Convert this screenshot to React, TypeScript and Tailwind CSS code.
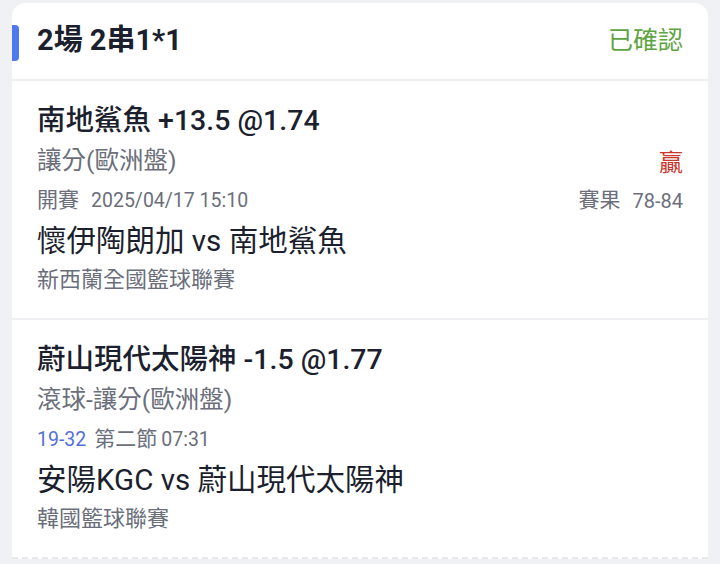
import React from 'react';

const font = { fontFamily: 'Roboto, "Noto Sans CJK TC", sans-serif' };

interface Leg {
  pick: string;
  market: string;
  timeLabel: React.ReactNode;
  teams: string;
  league: string;
  outcome?: string;
  result?: string;
}

const legs: Leg[] = [
  {
    pick: '南地鯊魚 +13.5 @1.74',
    market: '讓分(歐洲盤)',
    timeLabel: (
      <>
        <span className="text-[21px]">開賽</span>
        <span className="ml-3">2025/04/17 15:10</span>
      </>
    ),
    teams: '懷伊陶朗加 vs 南地鯊魚',
    league: '新西蘭全國籃球聯賽',
    outcome: '贏',
    result: '78-84',
  },
  {
    pick: '蔚山現代太陽神 -1.5 @1.77',
    market: '滾球-讓分(歐洲盤)',
    timeLabel: (
      <>
        <span className="text-[#5470d8]">19-32</span>
        <span className="ml-2 text-[21px]">第二節</span>
        <span className="ml-1">07:31</span>
      </>
    ),
    teams: '安陽KGC vs 蔚山現代太陽神',
    league: '韓國籃球聯賽',
  },
];

const LegRow: React.FC<{ leg: Leg; last?: boolean }> = ({ leg, last }) => (
  <div
    className={
      last
        ? 'px-[25px] pt-5 pb-[19px] border-b-2 border-dashed border-[#e6e8ec]'
        : 'px-[25px] pt-5 pb-[19px] border-b-2 border-[#eef0f3]'
    }
  >
    <div className="text-[28.5px] leading-[40px] font-medium text-[#1c1f2e]">{leg.pick}</div>
    <div className="flex items-center justify-between h-[40px]">
      <span className="text-[24.5px] text-[#6b6f7b]">{leg.market}</span>
      {leg.outcome && <span className="text-[24px] text-[#c9372c] pt-1">{leg.outcome}</span>}
    </div>
    <div className="flex items-center justify-between h-[40px] text-[19.5px] text-[#6b6f7b]">
      <div className="flex items-center">{leg.timeLabel}</div>
      {leg.result && (
        <div className="flex items-center">
          <span className="text-[21px]">賽果</span>
          <span className="ml-3 text-[20px]">{leg.result}</span>
        </div>
      )}
    </div>
    <div className="text-[29.5px] leading-[40px] text-[#1c1f2e]">{leg.teams}</div>
    <div className="text-[22px] leading-[38px] text-[#6b6f7b]">{leg.league}</div>
  </div>
);

export default function App() {
  return (
    <div className="min-h-[564px] bg-[#eff1f4] pt-[3px] px-3 overflow-hidden" style={font}>
      <div className="bg-white rounded-t-[14px]">
        <div className="relative flex items-center justify-between h-[78px] px-[25px] border-b-2 border-[#eef0f3]">
          <span className="absolute left-0 top-[22px] w-[7px] h-[36px] rounded-r-[4px] bg-[#4e78ef]" />
          <span className="text-[29px] font-bold text-[#1c1f2e]">2場 2串1*1</span>
          <span className="text-[25px] text-[#5ea542]">已確認</span>
        </div>
        {legs.map((leg, i) => (
          <LegRow key={i} leg={leg} last={i === legs.length - 1} />
        ))}
      </div>
    </div>
  );
}
